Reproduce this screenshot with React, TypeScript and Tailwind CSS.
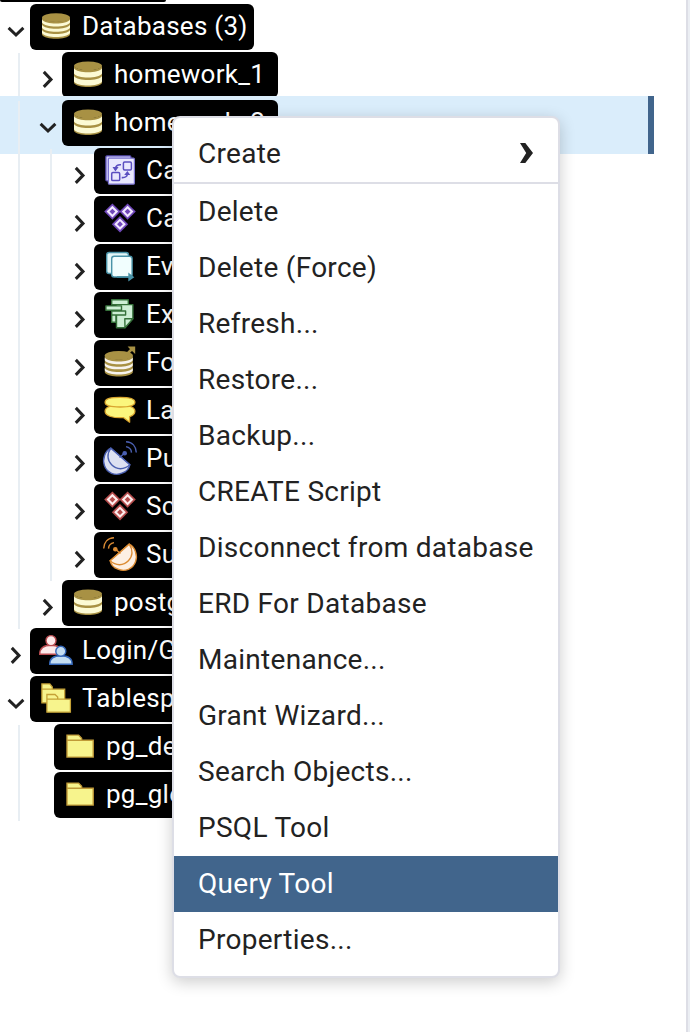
import type { ReactNode } from 'react';

function Icon({ children }: { children: ReactNode }) {
  return (
    <svg viewBox="0 0 32 32" className="h-8 w-8 shrink-0 overflow-visible" fill="none">
      {children}
    </svg>
  );
}

function Band({ top, bottom, fill }: { top: number; bottom: number; fill: string }) {
  return (
    <path
      d={`M2 ${top}C5 ${top + 5.3} 27 ${top + 5.3} 30 ${top}V${bottom}C27 ${bottom + 5.3} 5 ${bottom + 5.3} 2 ${bottom}Z`}
      fill={fill}
    />
  );
}

const DatabaseIcon = () => (
  <Icon>
    <Band top={8} bottom={25} fill="#a89144" />
    <ellipse cx="16" cy="7.8" rx="14" ry="4.4" fill="#a89144" />
    <Band top={10.2} bottom={15.6} fill="#fcfad4" />
    <Band top={18} bottom={23.4} fill="#fcfad4" />
  </Icon>
);

const DatabasesIcon = () => (
  <Icon>
    <Band top={7.5} bottom={24.8} fill="#a89144" />
    <ellipse cx="16" cy="7.6" rx="14" ry="4.4" fill="#a89144" />
    <Band top={9.6} bottom={12.6} fill="#fcfad4" />
    <Band top={14.8} bottom={17.8} fill="#fcfad4" />
    <Band top={20} bottom={23} fill="#fcfad4" />
  </Icon>
);

const ForeignIcon = () => (
  <Icon>
    <g transform="translate(-1.2 1.8)">
      <Band top={7.5} bottom={24.8} fill="#a89144" />
      <ellipse cx="16" cy="7.6" rx="14" ry="4.4" fill="#a89144" />
      <Band top={9.8} bottom={12.4} fill="#f7f4ee" />
      <Band top={15} bottom={17.6} fill="#f7f4ee" />
      <Band top={20.2} bottom={22.8} fill="#f7f4ee" />
    </g>
    <path d="M22.5 8.5L28 3" stroke="#a89144" strokeWidth="2.6" />
    <path d="M23.6 .4H31.2V8L28.6 5.6L26.2 3.2Z" fill="#a89144" />
  </Icon>
);

const CastsIcon = () => (
  <Icon>
    <rect x="1.9" y="1.9" width="25" height="25" rx="1" fill="#cfcdf6" stroke="#5b50b8" strokeWidth="1.2" />
    <rect x="4.4" y="4.2" width="26" height="26" rx="1" fill="#e9e8fd" stroke="#7b73d0" strokeWidth="1.2" />
    <rect x="19.4" y="8" width="8" height="8" rx="1.2" stroke="#5b4fc0" strokeWidth="1.5" />
    <rect x="7.7" y="18.6" width="8" height="8" rx="1.2" stroke="#5b4fc0" strokeWidth="1.5" />
    <path d="M17 10.8C13.5 10.5 12 11.7 11.6 14M17.7 23.6C21.3 23.8 23 22.4 23.3 20.5" stroke="#5b4fc0" strokeWidth="1.6" />
    <path d="M8.5 13H14.6L11.4 17.4ZM20.2 21L23.4 16.9L26.3 21Z" fill="#5b4fc0" />
  </Icon>
);

function Diamonds({ color, light }: { color: string; light: string }) {
  const centres = [
    [8.4, 9.6],
    [23.6, 9.6],
    [16, 22.2],
  ];
  return (
    <Icon>
      {centres.map(([x, y]) => (
        <g key={`${x}-${y}`} transform={`translate(${x} ${y})`}>
          <path d="M0-8.2L8.2 0L0 8.2L-8.2 0Z" fill={color} />
          <path d="M0-5.8L5.8 0L0 5.8L-5.8 0Z" fill={light} />
          <path d="M0-2.9L2.9 0L0 2.9L-2.9 0Z" fill={color} />
        </g>
      ))}
    </Icon>
  );
}

const EventIcon = () => (
  <Icon>
    <rect x="2.7" y="2.5" width="21.8" height="21" rx="2.5" fill="#e3f6f7" stroke="#4a93a8" strokeWidth="1.4" />
    <rect x="7.7" y="6.2" width="20.4" height="20.8" rx="2.5" fill="#f1fefe" stroke="#4a93a8" strokeWidth="1.4" />
    <path d="M13 27.2H26" stroke="#3c8499" strokeWidth="1.6" />
    <path d="M24.3 22.6L30.3 27.2L24.3 31.5Z" fill="#4a93a8" />
  </Icon>
);

const ExtensionIcon = () => (
  <Icon>
    <g fill="#cdeed5" stroke="#35703a" strokeWidth="1.4" strokeLinejoin="round">
      <path d="M7.7 1.8H24.3V6.6H7.7Z" />
      <path d="M7.7 12H12V24.3H7.7Z" />
      <path d="M12 6.6H28.9V20.5L20.8 29.8H12.5V6.6Z" />
      <path d="M1.9 7.9H17.5V12.2H1.9Z" />
      <path d="M7.7 13H21.6V17H7.7Z" />
      <path d="M20.8 20.8H28.9L21 29.8Z" />
    </g>
  </Icon>
);

const LanguageIcon = () => (
  <Icon>
    <g fill="#fbf67d" stroke="#d9a52f" strokeWidth="1.3" strokeLinejoin="round">
      <path d="M16 11.4C25 11.4 30.9 12.8 30.9 17.2C30.9 20.2 28.5 21.7 25.6 22.6V28.2L19.3 23.6C10 24.2 1.1 22.2 1.1 17.2C1.1 12.8 7 11.4 16 11.4Z" />
      <path d="M16 3.4C25 3.4 30.9 4.6 30.9 8.2S25 13 16 13S1.1 11.8 1.1 8.2S7 3.4 16 3.4Z" />
    </g>
  </Icon>
);

function Dish({ color, light, mirrored }: { color: string; light: string; mirrored?: boolean }) {
  return (
    <Icon>
      <g transform={mirrored ? 'translate(32 0) scale(-1 1)' : undefined} stroke={color} strokeWidth="1.4">
        <path d="M6.8 6.2C1 9-1.8 17 .4 23.5C3 31 11 34.2 18 31.2C22 29.8 25 26.8 25.8 22.8Z" fill={light} />
        <path d="M6.8 6.2C2.6 12 3.3 18.5 7.6 22.8C12.5 27.9 20 28.2 25.8 22.8Z" fill={light} />
        <path d="M15.5 15.5L20.5 11.3" />
        <circle cx="20.7" cy="11.3" r="2.3" fill={color} stroke="none" />
        <path d="M22 4.6C25.4 5.2 27.3 7.4 27.5 10.6M22 -.2C28.3 .2 32.1 4.5 32.3 10.6" />
      </g>
    </Icon>
  );
}

const UsersIcon = () => (
  <Icon>
    <g fill="#fdeaea" stroke="#b94b50" strokeWidth="1.4">
      <path d="M-.3 20.2C-.3 14.5 3.5 11.3 11 11.3S22 14.5 22 20.2Z" />
      <circle cx="11" cy="6.6" r="5" />
    </g>
    <g fill="#c5def2" stroke="#3567b8" strokeWidth="1.4">
      <path d="M9.7 30.2C9.7 25 13 21.8 20.8 21.8S32.2 25 32.2 30.2Z" />
      <circle cx="20.8" cy="17.2" r="5" />
    </g>
  </Icon>
);

const FoldersIcon = () => (
  <Icon>
    <g fill="#f7f48d" stroke="#c5a136" strokeWidth="1.3">
      <path d="M1.9 1.9H9.8L12.3 5V7.2H24.7V20.8H1.9ZM1.9 7.2H12.3" />
      <path d="M6.9 12.5H15L17.7 15V17.2H30.4V30.2H6.9ZM6.9 17.2H17.7" />
    </g>
  </Icon>
);

const FolderIcon = () => (
  <Icon>
    <path
      d="M3 5.1H14.6L17.6 8.2V10.2H29.2V27.1H3ZM3 10.2H17.6"
      fill="#f7f48d"
      stroke="#c09a38"
      strokeWidth="1.4"
    />
  </Icon>
);

function Chevron({ open }: { open: boolean }) {
  return (
    <svg viewBox="0 0 20 20" className="mt-4 h-5 w-5 shrink-0" fill="none" stroke="#222" strokeWidth="3">
      <path d={open ? 'M2.6 6.9L10 14L17.4 6.9' : 'M5.8 2.9L13 10.4L5.8 17.9'} />
    </svg>
  );
}

type Row = {
  label: string;
  icon: ReactNode;
  depth: number;
  state?: 'open' | 'closed';
  pill: string;
  selected?: boolean;
};

const rows: Row[] = [
  { label: 'Databases (3)', icon: <DatabasesIcon />, depth: 0, state: 'open', pill: 'w-[224px]' },
  { label: 'homework_1', icon: <DatabaseIcon />, depth: 1, state: 'closed', pill: 'w-[216px]' },
  { label: 'homework_2', icon: <DatabaseIcon />, depth: 1, state: 'open', pill: 'w-[216px]', selected: true },
  { label: 'Casts', icon: <CastsIcon />, depth: 2, state: 'closed', pill: 'w-[140px]' },
  { label: 'Catalogs', icon: <Diamonds color="#7048ba" light="#f1e8ff" />, depth: 2, state: 'closed', pill: 'w-[170px]' },
  { label: 'Event Triggers', icon: <EventIcon />, depth: 2, state: 'closed', pill: 'w-[240px]' },
  { label: 'Extensions', icon: <ExtensionIcon />, depth: 2, state: 'closed', pill: 'w-[200px]' },
  { label: 'Foreign Data Wrappers', icon: <ForeignIcon />, depth: 2, state: 'closed', pill: 'w-[330px]' },
  { label: 'Languages', icon: <LanguageIcon />, depth: 2, state: 'closed', pill: 'w-[200px]' },
  { label: 'Publications', icon: <Dish color="#4a5fb0" light="#dde1f2" />, depth: 2, state: 'closed', pill: 'w-[210px]' },
  { label: 'Schemas', icon: <Diamonds color="#b54d4d" light="#fdeeee" />, depth: 2, state: 'closed', pill: 'w-[180px]' },
  { label: 'Subscriptions', icon: <Dish color="#dc8c34" light="#fdf0e4" mirrored />, depth: 2, state: 'closed', pill: 'w-[230px]' },
  { label: 'postgres', icon: <DatabaseIcon />, depth: 1, state: 'closed', pill: 'w-[180px]' },
  { label: 'Login/Group Roles', icon: <UsersIcon />, depth: 0, state: 'closed', pill: 'w-[290px]' },
  { label: 'Tablespaces', icon: <FoldersIcon />, depth: 0, state: 'open', pill: 'w-[220px]' },
  { label: 'pg_default', icon: <FolderIcon />, depth: 1, pill: 'w-[190px]' },
  { label: 'pg_global', icon: <FolderIcon />, depth: 1, pill: 'w-[190px]' },
];

function TreeRow({ row }: { row: Row }) {
  return (
    <div className="relative h-12">
      {row.selected && (
        <div className="absolute -top-[5px] left-0 h-[58px] w-[654px] border-r-[6px] border-[#41658c] bg-[#daedfb]" />
      )}
      <div className="relative flex h-12">
        {Array.from({ length: row.depth }, (_, i) => (
          <div key={i} className="flex w-8 shrink-0 justify-end pr-3">
            <div className="h-12 w-0.5 bg-[#e8eef3]" />
          </div>
        ))}
        {row.state ? (
          <div className="flex w-[30px] shrink-0 pl-[6px]">
            <Chevron open={row.state === 'open'} />
          </div>
        ) : (
          <div className="w-[22px] shrink-0" />
        )}
        <div className={`-mt-px flex h-[46px] shrink-0 items-start gap-2.5 rounded-md bg-black px-2.5 pt-1.5 text-white ${row.pill}`}>
          {row.icon}
          <span className="-mt-[7px] text-[26px] leading-[46px] tracking-[0.26px] whitespace-nowrap">{row.label}</span>
        </div>
      </div>
    </div>
  );
}

const actions = [
  'Delete',
  'Delete (Force)',
  'Refresh...',
  'Restore...',
  'Backup...',
  'CREATE Script',
  'Disconnect from database',
  'ERD For Database',
  'Maintenance...',
  'Grant Wizard...',
  'Search Objects...',
  'PSQL Tool',
  'Query Tool',
  'Properties...',
];

function ContextMenu() {
  return (
    <div className="absolute top-[116px] left-[172px] w-[388px] rounded-lg border-2 border-[#dddee6] bg-white py-2 text-[28px] leading-[56px] tracking-[0.28px] text-[#222] shadow-[0_4px_16px_rgba(0,0,0,0.2)]">
      <div className="flex h-[58px] items-start justify-between border-b-2 border-[#dddee6] px-6">
        <span>Create</span>
        <svg viewBox="0 0 16 20" className="mt-[17px] h-5 w-4" fill="#222">
          <path d="M2 0H7.3L15 10L7.3 20H2L8.2 10Z" />
        </svg>
      </div>
      {actions.map((label) => (
        <div
          key={label}
          className={label === 'Query Tool' ? 'h-14 bg-[#41658c] px-6 whitespace-nowrap text-white' : 'h-14 px-6 whitespace-nowrap'}
        >
          {label}
        </div>
      ))}
    </div>
  );
}

export default function App() {
  return (
    <div className="relative flex h-[1032px] w-[690px] overflow-hidden bg-white font-['Roboto',sans-serif]">
      <div className="w-[686px] shrink-0 overflow-hidden">
        <div className="mb-[3px] h-0.5 w-[166px] rounded-b-sm bg-black" />
        {rows.map((row) => (
          <TreeRow key={row.label} row={row} />
        ))}
      </div>
      <div className="w-0.5 bg-[#dddee6]" />
      <div className="w-0.5 bg-[#ebeef3]" />
      <ContextMenu />
    </div>
  );
}
